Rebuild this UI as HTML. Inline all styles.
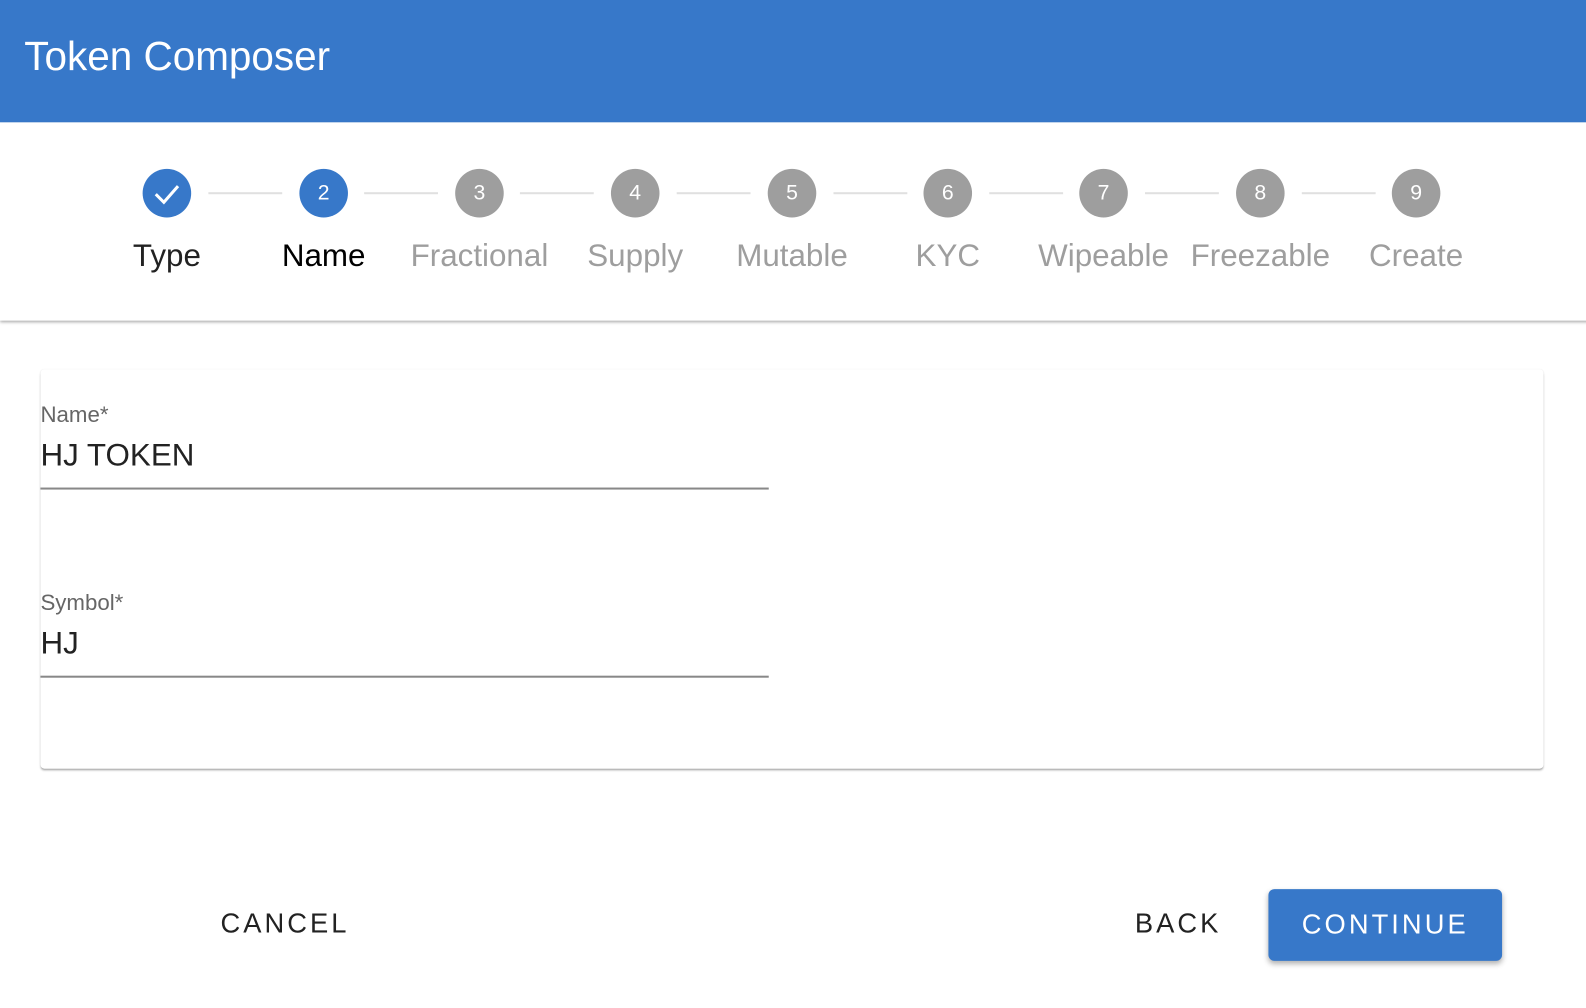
<!DOCTYPE html>
<html><head><meta charset="utf-8"><style>
*{margin:0;padding:0;box-sizing:border-box}
body{width:1586px;height:1008px;background:#fff;font-family:"Liberation Sans",sans-serif;position:relative;overflow:hidden}
.wrap{position:absolute;left:0;top:0;width:1568px;height:997px;transform:scale(1.0115);transform-origin:0 0}
.hdr{position:absolute;left:0;top:0;width:1600px;height:121px;background:#3778c9}
.hdr span{position:absolute;left:24px;top:34px;font-size:40px;color:#fff}
.stepper{position:absolute;left:0;top:121px;width:1600px;height:196px;background:#fff;box-shadow:0 2px 3px rgba(0,0,0,.35);z-index:2}
.c{position:absolute;width:48px;height:48px;border-radius:50%;background:#9e9e9e;color:#fff;font-size:21px;text-align:center;line-height:48px;top:46px}
.c.a{background:#3778c9}
.l{position:absolute;top:114px;width:200px;text-align:center;font-size:31px;color:#9e9e9e}
.ln{position:absolute;top:69px;height:2px;background:#e0e0e0}
.card{position:absolute;left:40px;top:365px;width:1486px;height:395px;background:#fff;border-radius:4px;box-shadow:0 2px 2px -1px rgba(0,0,0,.4),0 0 1px rgba(0,0,0,.06)}
.lab{position:absolute;left:40px;font-size:22px;color:#666}
.val{position:absolute;left:40px;font-size:31px;color:#222}
.ul{position:absolute;left:40px;width:720px;height:2px;background:#888}
.btn{position:absolute;font-size:27px;letter-spacing:3px;color:#222}
.cont{position:absolute;left:1254px;top:879px;width:231px;height:71px;background:#3778c9;border-radius:6px;box-shadow:0 3px 5px rgba(0,0,0,.3);color:#fff;font-size:27px;letter-spacing:3px;text-align:center;line-height:71px}
</style></head><body><div class="wrap">
<div class="hdr"><span>Token Composer</span></div>
<div class="stepper">
<div class="ln" style="left:206px;width:73px"></div>
<div class="ln" style="left:360px;width:73px"></div>
<div class="ln" style="left:514px;width:73px"></div>
<div class="ln" style="left:669px;width:73px"></div>
<div class="ln" style="left:824px;width:73px"></div>
<div class="ln" style="left:978px;width:73px"></div>
<div class="ln" style="left:1132px;width:73px"></div>
<div class="ln" style="left:1287px;width:73px"></div>
<div class="c a" style="left:141px"><svg width="48" height="48" viewBox="0 0 48 48"><path d="M13 25 L21 33 L35 17" stroke="#fff" stroke-width="3" fill="none"/></svg></div>
<div class="c a" style="left:296px">2</div>
<div class="c" style="left:450px">3</div>
<div class="c" style="left:604px">4</div>
<div class="c" style="left:759px">5</div>
<div class="c" style="left:913px">6</div>
<div class="c" style="left:1067px">7</div>
<div class="c" style="left:1222px">8</div>
<div class="c" style="left:1376px">9</div>
<div class="l" style="left:65px;color:#222">Type</div>
<div class="l" style="left:220px;color:#000">Name</div>
<div class="l" style="left:374px">Fractional</div>
<div class="l" style="left:528px">Supply</div>
<div class="l" style="left:683px">Mutable</div>
<div class="l" style="left:837px">KYC</div>
<div class="l" style="left:991px">Wipeable</div>
<div class="l" style="left:1146px">Freezable</div>
<div class="l" style="left:1300px">Create</div>
</div>
<div class="card"></div>
<div class="lab" style="top:397px">Name*</div>
<div class="val" style="top:432px">HJ TOKEN</div>
<div class="ul" style="top:482px"></div>
<div class="lab" style="top:583px">Symbol*</div>
<div class="val" style="top:618px">HJ</div>
<div class="ul" style="top:668px"></div>
<div class="btn" style="left:218px;top:898px">CANCEL</div>
<div class="btn" style="left:1122px;top:898px">BACK</div>
<div class="cont">CONTINUE</div>
</div></body></html>
